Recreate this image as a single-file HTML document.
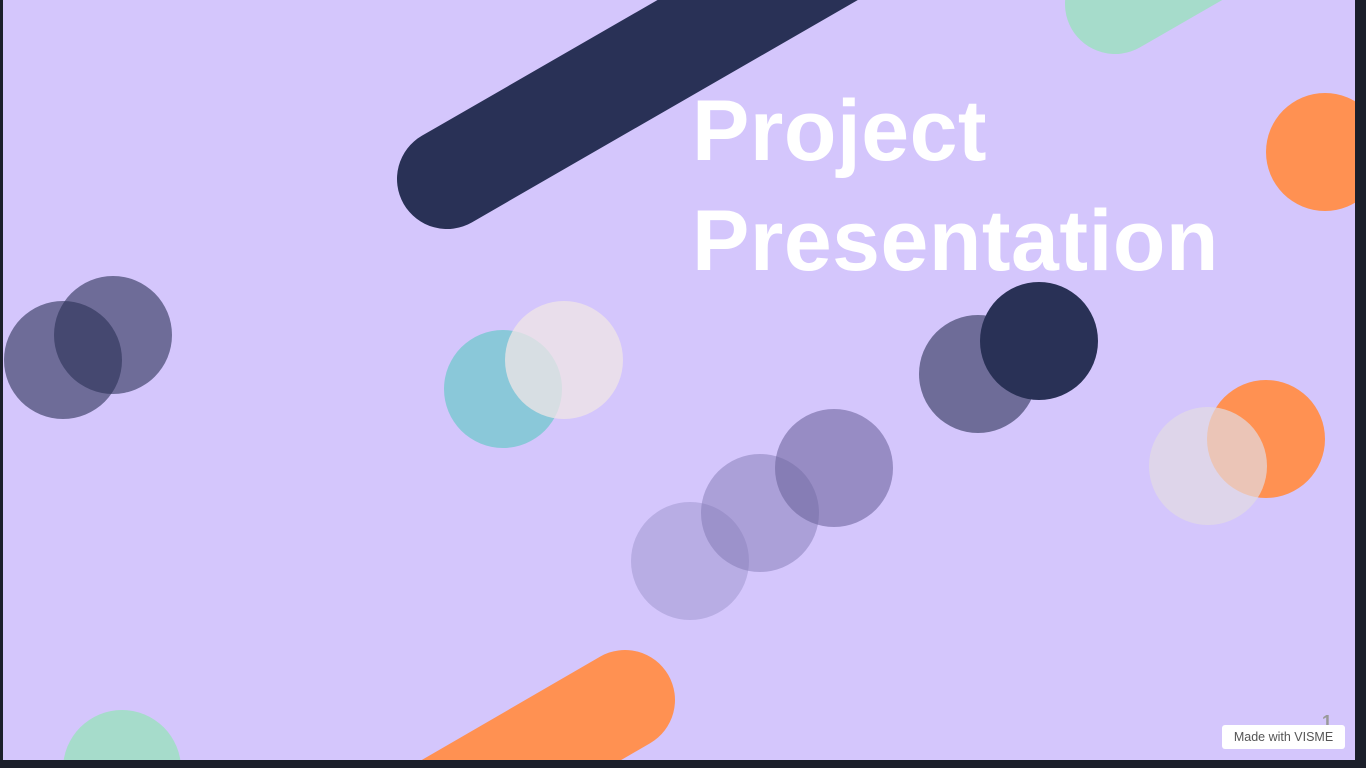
<!DOCTYPE html>
<html><head><style>
html,body{margin:0;padding:0;width:1366px;height:768px;overflow:hidden;background:#1b1f2a;position:relative}
svg{position:absolute;left:0;top:0;display:block}
.t{position:absolute;left:692px;color:#fff;font-family:"Liberation Sans",sans-serif;font-weight:bold;font-size:86px;line-height:1;letter-spacing:0.5px;white-space:nowrap}
.b{position:absolute;left:1222px;top:725px;width:123px;height:24px;background:#fff;border-radius:3px;font:12.5px "Liberation Sans",sans-serif;color:#555;text-align:center;line-height:24px}
.n{position:absolute;left:1322px;top:712px;font:bold 18px "Liberation Sans",sans-serif;color:#999}
</style></head><body>
<svg width="1366" height="768">
<defs><clipPath id="c"><rect x="3" y="0" width="1352" height="760"/></clipPath></defs>
<g clip-path="url(#c)">
<rect x="3" y="0" width="1352" height="760" fill="#d4c6fc"/>
<line x1="447" y1="179" x2="900" y2="-82" stroke="#293156" stroke-width="100" stroke-linecap="round"/>
<line x1="1115" y1="4" x2="1400" y2="-160" stroke="#a6dccb" stroke-width="100" stroke-linecap="round"/>
<line x1="625" y1="700" x2="380" y2="842" stroke="#ff9152" stroke-width="100" stroke-linecap="round"/>
<circle cx="1325" cy="152" r="59" fill="#ff9152"/>
<circle cx="63" cy="360" r="59" fill="#2a3155" opacity="0.6"/>
<circle cx="113" cy="335" r="59" fill="#2a3155" opacity="0.6"/>
<circle cx="503" cy="389" r="59" fill="#8ac8d9"/>
<circle cx="564" cy="360" r="59" fill="#f0e6e6" opacity="0.75"/>
<circle cx="978" cy="374" r="59" fill="#2a3155" opacity="0.6"/>
<circle cx="1039" cy="341" r="59" fill="#293156"/>
<circle cx="1266" cy="439" r="59" fill="#ff9152"/>
<circle cx="1208" cy="466" r="59" fill="#e2dce2" opacity="0.7"/>
<circle cx="690" cy="561" r="59" fill="#8f86c0" opacity="0.4"/>
<circle cx="760" cy="513" r="59" fill="#7a70ad" opacity="0.45"/>
<circle cx="834" cy="468" r="59" fill="#6e669f" opacity="0.6"/>
<circle cx="122" cy="769" r="59" fill="#a6dccb"/>
</g>
</svg>
<div class="t" style="top:88px">Project</div>
<div class="t" style="top:198px">Presentation</div>
<div class="n">1</div>
<div class="b">Made with VISME</div>
</body></html>
